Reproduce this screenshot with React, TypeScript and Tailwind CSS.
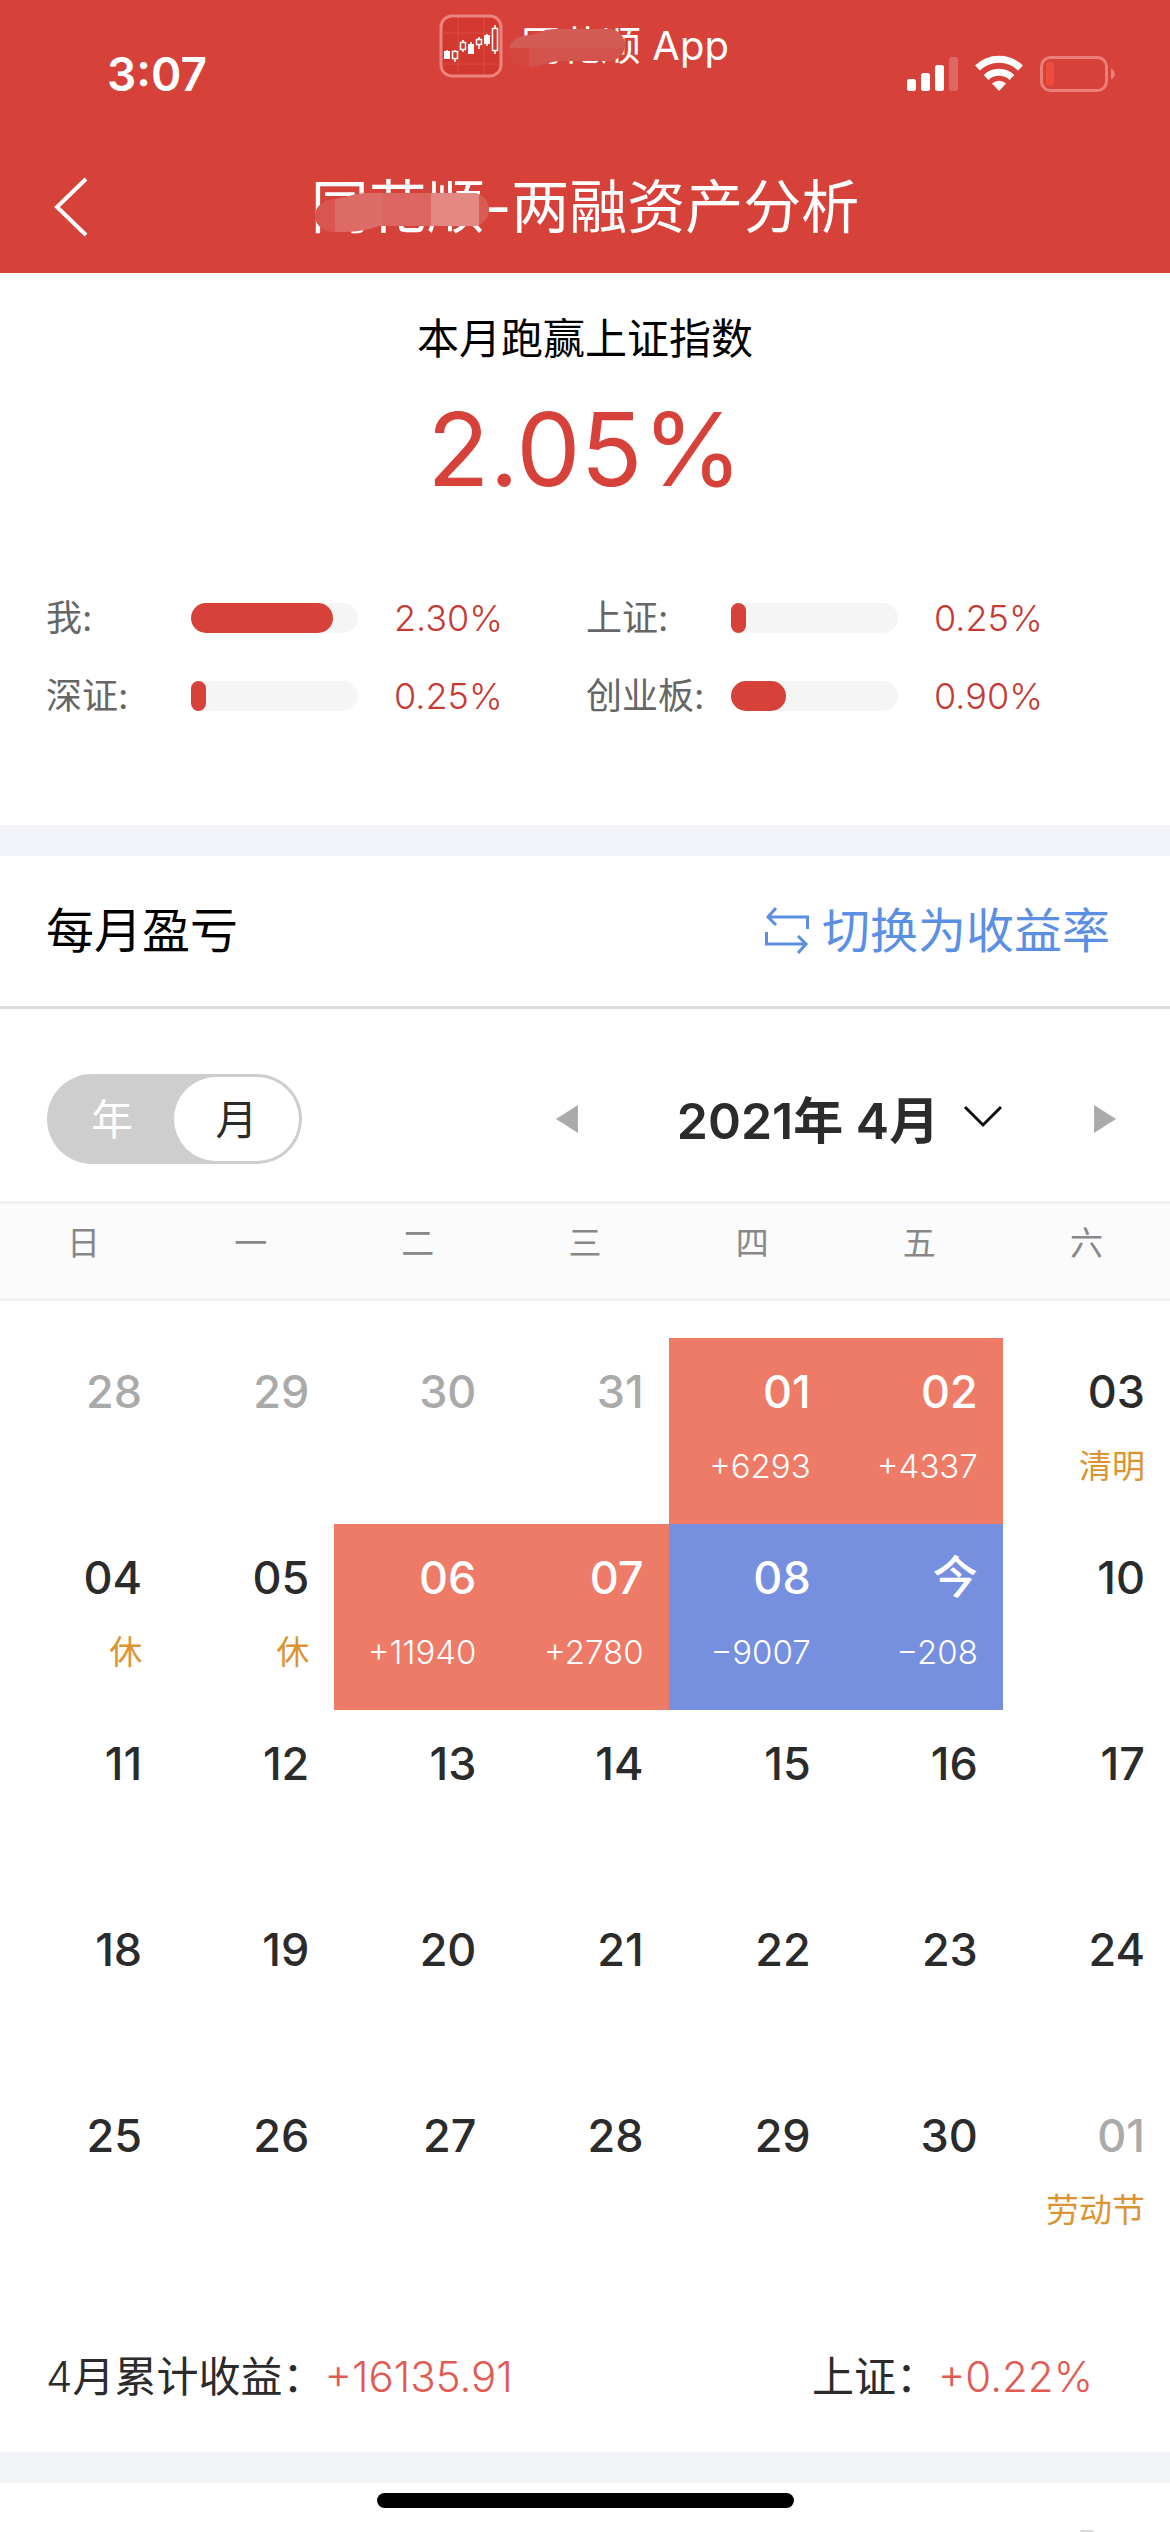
import type { ReactNode } from "react";

type Day = { d: string; note?: string; kind?: "up" | "down" | "holiday"; muted?: boolean };

const benchmarks = [
  { name: "我", value: "2.30%", width: 85 },
  { name: "上证", value: "0.25%", width: 9 },
  { name: "深证", value: "0.25%", width: 9 },
  { name: "创业板", value: "0.90%", width: 33 },
];

const weekdays = ["日", "一", "二", "三", "四", "五", "六"];

const days: Day[] = [
  { d: "28", muted: true },
  { d: "29", muted: true },
  { d: "30", muted: true },
  { d: "31", muted: true },
  { d: "01", note: "+6293", kind: "up" },
  { d: "02", note: "+4337", kind: "up" },
  { d: "03", note: "清明", kind: "holiday" },
  { d: "04", note: "休", kind: "holiday" },
  { d: "05", note: "休", kind: "holiday" },
  { d: "06", note: "+11940", kind: "up" },
  { d: "07", note: "+2780", kind: "up" },
  { d: "08", note: "−9007", kind: "down" },
  { d: "今", note: "−208", kind: "down" },
  ...Array.from({ length: 21 }, (_, i) => ({ d: String(i + 10) })),
  { d: "01", note: "劳动节", kind: "holiday", muted: true },
];

const weeks = Array.from({ length: 5 }, (_, i) => days.slice(i * 7, i * 7 + 7));

function StatusIcons() {
  return (
    <svg className="h-[38px] w-[210px]" viewBox="0 0 210 38" fill="none" aria-hidden="true">
      <g fill="#fff">
        <rect x="1" y="25" width="9" height="12" rx="2.5" />
        <rect x="15" y="19" width="9" height="18" rx="2.5" />
        <rect x="29" y="11" width="9" height="26" rx="2.5" />
        <rect x="43" y="3" width="9" height="34" rx="2.5" opacity=".2" />
      </g>
      <g stroke="#fff" strokeWidth="7">
        <path d="M71.500 14a31 31 0 0 1 43 0" />
        <path d="M80 23.500a19 19 0 0 1 26 0" />
      </g>
      <path d="M93 37l-7-7.500a10 10 0 0 1 14 0z" fill="#fff" />
      <rect x="135.500" y="3.500" width="65" height="33" rx="9" stroke="#e97f78" strokeWidth="3" />
      <path d="M205 14.500c5 2 5 9 0 11z" fill="#e97f78" />
      <rect x="140" y="8" width="8" height="24" rx="3" fill="#ee4d3c" />
    </svg>
  );
}

function CandleLogo() {
  return (
    <svg className="h-[64px] w-[64px]" viewBox="0 0 64 64" fill="none" aria-hidden="true">
      <rect x="2" y="2" width="60" height="60" rx="11" fill="#d2382f" stroke="#ec837c" strokeWidth="3" />
      <path d="M4 19h56M4 50h56M19 4v56M45 4v56" stroke="#d94a42" strokeWidth="1" />
      <path d="M8 36v9M16 36v12M24 26v12M32 28v12M40 23v12M48 20v12M56 11v29" stroke="#fff" strokeWidth="1.500" />
      <rect x="5" y="37" width="6" height="8" fill="#fff" />
      <rect x="13.500" y="37.500" width="5" height="7" fill="#d2382f" stroke="#fff" strokeWidth="1.500" />
      <rect x="21.500" y="28.500" width="5" height="7" fill="#d2382f" stroke="#fff" strokeWidth="1.500" />
      <rect x="29" y="30" width="6" height="10" fill="#fff" />
      <rect x="37.500" y="25.500" width="5" height="5" fill="#d2382f" stroke="#fff" strokeWidth="1.500" />
      <rect x="45" y="21" width="6" height="9" fill="#fff" />
      <rect x="53.500" y="14.500" width="5" height="22" fill="#d2382f" stroke="#fff" strokeWidth="1.500" />
    </svg>
  );
}

function TitleMask() {
  return (
    <svg className="absolute top-[20px] left-1 h-[40px] w-[178px]" viewBox="0 0 178 40" aria-hidden="true">
      <clipPath id="title-mask">
        <path d="M20 40C8 40 0 33 0 24S7 8 20 7C34 5 40 1 52 1H161a17 17 0 0 1 0 33H64C52 38 46 40 20 40z" />
      </clipPath>
      <g clipPath="url(#title-mask)">
        <path d="M0 0h20v40H0z" fill="#d95650" />
        <path d="M20 0h48v40H20z" fill="#dd6b66" />
        <path d="M68 0h48v40H68z" fill="#dc655f" />
        <path d="M116 0h48v40h-48z" fill="#e48883" />
        <path d="M164 0h14v40h-14z" fill="#da5a54" />
      </g>
    </svg>
  );
}

function Amount({ children }: { children: ReactNode }) {
  return <span className="font-light text-[#e25b53]">{children}</span>;
}

export default function App() {
  return (
    <div className="min-h-screen w-full overflow-hidden bg-white font-['Inter','Noto_Sans_CJK_SC',sans-serif] text-[#2b2b2b]">
      <header className="bg-[#d64139] text-white">
        <div className="grid h-[141px] grid-cols-[1fr_auto_1fr] items-start">
          <div className="pt-[46px] pl-[107px] text-[46px] leading-[56px] font-semibold">3:07</div>
          <div className="flex items-center gap-[18px] pt-[14px] pr-[2px] text-[40px] leading-[64px]">
            <CandleLogo />
            <div className="relative">
              <span>同花顺 App</span>
              <svg className="absolute top-[15px] -left-[12px] h-[38px] w-[116px]" viewBox="0 0 116 38" aria-hidden="true">
                <clipPath id="app-mask">
                  <path d="M19 38C6 38 0 31 0 22S8 6 22 6C32 3 36 0 46 0H100A16 16 0 0 1 100 32H52C40 32 34 38 19 38z" />
                </clipPath>
                <g clipPath="url(#app-mask)">
                  <path d="M0 0h116v19H0z" fill="#d35c54" />
                  <path d="M0 19h116v19H0z" fill="#d2544c" />
                  <path d="M0 19h20v19H0z" fill="#d4463e" />
                </g>
              </svg>
            </div>
          </div>
          <div className="flex justify-end pt-[54px] pr-[54px]">
            <StatusIcons />
          </div>
        </div>
        <div className="grid h-[132px] grid-cols-[120px_1fr_120px] items-center">
          <button type="button" aria-label="返回" className="flex h-full items-center pl-[53px]">
            <svg className="h-[60px] w-[36px]" viewBox="0 0 36 60" fill="none" stroke="#fff" strokeWidth="4" aria-hidden="true">
              <path d="M33 2L4 30l29 28" />
            </svg>
          </button>
          <h1 className="text-center text-[58px] leading-[80px]">
            <span className="relative">
              同花顺
              <TitleMask />
            </span>
            -两融资产分析
          </h1>
        </div>
      </header>

      <section className="h-[552px] pt-[36px]">
        <h2 className="text-center text-[42px] leading-[60px] text-black">本月跑赢上证指数</h2>
        <p className="pt-[20px] text-center text-[102px] leading-[120px] text-[#d64139]">2.05%</p>
        <dl className="grid grid-cols-2 gap-y-[30px] pt-[85px] pr-[44px] pl-[46px] text-[36px] leading-[48px]">
          {benchmarks.map((b) => (
            <div key={b.name} className="flex items-center">
              <dt className="w-[145px] shrink-0 text-[#666]">{b.name}:</dt>
              <dd className="flex items-center gap-[36px] font-light text-[#c63a33]">
                <span className="block h-[30px] w-[167px] rounded-full bg-[#f5f5f5]">
                  <span className="block h-full rounded-full bg-[#d64139]" style={{ width: `${b.width}%` }} />
                </span>
                {b.value}
              </dd>
            </div>
          ))}
        </dl>
      </section>

      <div className="h-[31px] bg-[#f2f3f8]" />

      <section>
        <div className="flex h-[153px] items-center justify-between border-b-[3px] border-[#dcdcdc] pr-[60px] pl-[46px] text-[48px] leading-[64px]">
          <h2 className="text-black">每月盈亏</h2>
          <button type="button" className="flex items-center gap-3 text-[#5a8fe4]">
            <svg className="h-[50px] w-[46px]" viewBox="0 0 46 50" fill="none" stroke="currentColor" strokeWidth="3" aria-hidden="true">
              <path d="M43.500 23V11H4M12 2l-8 9 8 8M2.500 26V38H42M34 30l8 8-8 9" />
            </svg>
            切换为收益率
          </button>
        </div>

        <div className="flex h-[192px] items-center pt-[32px] pr-[53px] pb-[4px] pl-[47px]">
          <div className="flex h-[90px] w-[255px] rounded-full bg-[#cecece] p-[3px] text-[42px]">
            <button type="button" className="flex-1 text-white">年</button>
            <button type="button" aria-pressed="true" className="w-[125px] rounded-full bg-white">月</button>
          </div>
          <div className="ml-auto flex w-[562px] items-center justify-between">
            <button type="button" aria-label="上个月">
              <svg className="h-[28px] w-[24px]" viewBox="0 0 24 28" fill="#aaa" aria-hidden="true">
                <path d="M23 0v28L1 14z" />
              </svg>
            </button>
            <button type="button" className="flex items-center gap-[24px] pt-[4px] pl-[8px] text-[50px] leading-[64px] font-semibold whitespace-pre">
              2021年 4月
              <svg className="mb-[8px] h-[24px] w-[40px]" viewBox="0 0 40 24" fill="none" stroke="#111" strokeWidth="3" aria-hidden="true">
                <path d="M2 2l18 18L38 2" />
              </svg>
            </button>
            <button type="button" aria-label="下个月">
              <svg className="h-[28px] w-[24px]" viewBox="0 0 24 28" fill="#aaa" aria-hidden="true">
                <path d="M1 0v28l22-14z" />
              </svg>
            </button>
          </div>
        </div>

        <table className="w-full table-fixed border-collapse">
          <thead className="border-y-[3px] border-[#f1f1f1] bg-[#fbfbfb]">
            <tr className="h-[97px]">
              {weekdays.map((w) => (
                <th key={w} className="pb-[16px] text-center text-[33px] leading-[48px] font-normal text-[#888]">{w}</th>
              ))}
            </tr>
          </thead>
          <tbody>
            <tr aria-hidden="true" className="h-[38px]" />
            {weeks.map((week, i) => (
              <tr key={i} className="h-[186px]">
                {week.map((day, j) => {
                  const filled = day.kind === "up" ? "bg-[#ed7b67] text-white" : day.kind === "down" ? "bg-[#7690df] text-white" : "";
                  return (
                    <td key={j} className={`pt-[26px] pr-[25px] text-right align-top ${filled}`}>
                      <div className={`text-[45px] leading-[56px] font-medium ${day.muted ? "text-[#aaa]" : ""}`}>{day.d}</div>
                      {day.note && (
                        <div className={`pt-[22px] text-[33px] leading-[48px] whitespace-nowrap ${day.kind === "holiday" ? "text-[#dc9432]" : "font-light"}`}>
                          {day.note}
                        </div>
                      )}
                    </td>
                  );
                })}
              </tr>
            ))}
          </tbody>
        </table>

        <div className="flex h-[184px] items-center justify-between pt-[34px] pr-[77px] pl-[46px] text-[42px] leading-[60px]">
          <p>
            <span className="font-light">4</span>月累计收益：<Amount>+16135.91</Amount>
          </p>
          <p>上证：<Amount>+0.22%</Amount></p>
        </div>
      </section>

      <div className="h-[31px] bg-[#f2f3f7]" />
      <div className="relative flex h-[49px] justify-center pt-[10px]">
        <div className="h-[15px] w-[417px] rounded-full bg-black" />
        <div className="absolute right-[76px] bottom-0 h-[2px] w-[14px] rounded-t-full bg-[#d8d8d8]" />
      </div>
    </div>
  );
}
